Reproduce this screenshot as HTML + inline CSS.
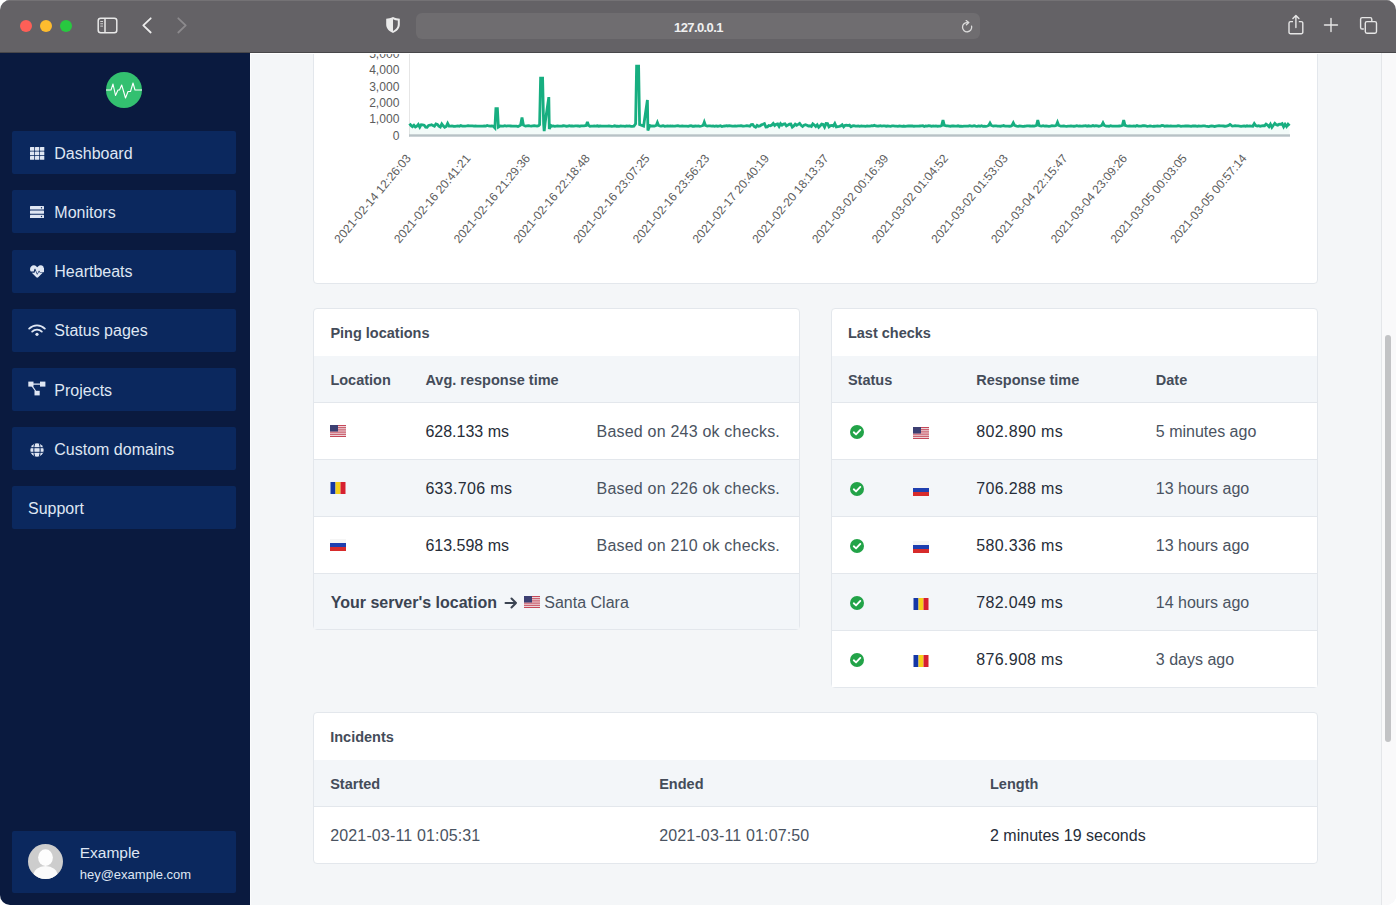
<!DOCTYPE html><html><head><meta charset="utf-8"><style>
*{margin:0;padding:0;box-sizing:border-box}
html,body{width:1396px;height:905px;overflow:hidden;background:#fff;font-family:"Liberation Sans",sans-serif}
#win{position:absolute;left:0;top:0;width:1396px;height:905px;overflow:hidden;border-radius:10px;background:#f4f6f8}
.box{position:absolute}
.tx{position:absolute;white-space:nowrap}
.b{font-weight:bold;font-size:14.5px;line-height:14.5px;color:#444c59}
.r{font-size:16px;line-height:16px}
.dk{color:#262d38}
.md{color:#4a5361}
.sb{font-size:16px;line-height:16px;color:#dfe6f3}
</style></head><body><div id="win"><div class="box" style="left:250px;top:52px;width:1146px;height:853px;background:#f4f6f8"></div>
<div class="box" style="left:1381px;top:52px;width:15px;height:853px;background:#f9f9fa;border-left:1px solid #e4e6e9"></div>
<div class="box" style="left:1385px;top:335px;width:6px;height:407px;background:#c2c3c5;border-radius:3px"></div>
<div class="box" style="left:313px;top:20px;width:1005px;height:264px;background:#fff;border:1px solid #e3e7ec;border-radius:4px"></div>
<svg class="box" style="left:0;top:0" width="1396" height="300" viewBox="0 0 1396 300"><line x1="409.5" y1="40" x2="409.5" y2="137" stroke="#e6e6e6" stroke-width="1"/><path d="M409.50,123.56 L410.97,125.44 L412.43,126.59 L413.90,125.25 L415.37,126.96 L416.83,126.10 L418.30,124.50 L419.77,127.17 L421.23,124.66 L422.70,124.82 L424.17,125.18 L425.63,127.10 L427.10,127.22 L428.57,125.44 L430.03,125.22 L431.50,124.72 L432.97,125.47 L434.43,126.21 L435.90,123.90 L437.37,124.44 L438.83,126.16 L440.30,127.06 L441.77,123.88 L443.23,125.76 L444.70,127.34 L446.17,126.49 L447.63,123.33 L449.10,126.15 L450.57,126.10 L452.03,125.99 L453.50,126.27 L454.97,126.28 L456.43,126.04 L457.90,125.95 L459.37,126.29 L460.83,125.59 L462.30,126.03 L463.77,126.13 L465.23,126.03 L466.70,125.94 L468.17,125.71 L469.63,125.90 L471.10,125.92 L472.57,125.81 L474.03,126.16 L475.50,125.99 L476.97,126.05 L478.43,126.14 L479.90,126.09 L481.37,126.11 L482.83,126.15 L484.30,125.97 L485.77,126.10 L487.23,125.51 L488.70,125.98 L490.17,126.19 L491.63,125.93 L493.10,126.12 L494.90,127.92 L495.90,108.73 L497.40,108.73 L498.40,127.10 L500.43,125.90 L501.90,126.04 L503.37,126.05 L504.83,125.70 L506.30,126.11 L507.77,125.89 L509.23,125.96 L510.70,126.00 L512.17,126.16 L513.63,126.11 L515.10,126.19 L516.57,126.15 L518.03,126.51 L519.50,125.89 L520.60,125.13 L522.00,117.59 L523.40,125.13 L525.37,126.13 L526.83,125.79 L528.30,125.68 L529.77,125.97 L531.23,126.17 L532.70,125.91 L534.17,125.73 L535.63,125.91 L537.10,126.08 L538.57,125.65 L539.60,124.64 L540.60,78.23 L542.60,78.23 L543.60,123.82 L544.20,131.20 L545.20,122.18 L548.80,97.09 L549.30,129.07 L550.80,125.46 L551.77,126.18 L553.23,125.92 L554.70,126.27 L556.17,126.07 L557.63,125.92 L559.10,126.05 L560.57,126.11 L562.03,126.00 L563.50,125.78 L564.97,125.87 L566.43,126.25 L567.90,126.12 L569.37,125.60 L570.83,126.02 L572.30,126.00 L573.77,126.06 L575.23,125.82 L576.70,125.92 L578.17,125.99 L579.63,126.21 L581.10,125.85 L582.57,125.91 L584.03,125.90 L586.20,125.46 L587.40,121.85 L588.60,125.46 L589.90,126.29 L591.37,126.13 L592.83,126.09 L594.30,126.00 L595.77,126.03 L597.23,125.78 L598.70,126.20 L600.17,125.99 L601.63,126.04 L603.10,126.18 L604.57,126.20 L606.03,126.06 L607.50,126.21 L608.97,125.96 L610.43,126.03 L611.90,126.34 L613.37,126.13 L614.83,125.77 L616.30,126.22 L617.77,126.13 L619.23,126.37 L620.70,125.88 L622.17,126.13 L623.63,126.20 L625.10,126.42 L626.57,125.89 L628.03,126.18 L629.50,125.94 L630.97,126.41 L632.43,126.28 L633.90,126.16 L635.60,123.82 L636.60,66.09 L638.60,66.09 L639.60,124.64 L643.60,126.12 L647.40,100.04 L647.90,130.38 L649.80,125.46 L651.50,126.14 L652.97,125.99 L654.43,126.10 L656.20,125.46 L657.40,122.51 L658.60,125.46 L660.30,126.17 L661.77,126.00 L663.23,125.73 L664.70,126.31 L666.17,126.03 L667.63,125.90 L669.10,126.11 L670.57,125.87 L672.03,126.02 L673.50,126.09 L674.97,126.15 L676.43,125.83 L677.90,125.66 L679.37,126.15 L680.83,126.21 L682.30,125.90 L683.77,126.14 L685.23,126.10 L686.70,126.15 L688.17,126.36 L689.63,125.88 L691.10,125.69 L692.57,126.24 L694.03,126.23 L695.50,125.86 L696.97,126.08 L698.43,125.94 L699.90,126.41 L701.37,126.03 L703.10,125.46 L704.30,122.18 L705.50,125.46 L707.23,126.08 L708.70,125.93 L710.17,125.85 L711.63,126.06 L713.10,125.90 L714.57,126.27 L716.03,125.89 L717.50,126.21 L718.97,126.03 L720.43,125.74 L721.90,126.51 L723.37,126.11 L724.83,126.01 L726.30,125.64 L727.77,125.96 L729.23,125.74 L730.70,125.95 L732.17,126.19 L733.63,126.11 L735.10,126.02 L736.57,126.07 L738.03,125.89 L739.50,125.87 L740.97,125.67 L742.43,125.98 L743.90,126.03 L745.37,125.93 L746.83,125.77 L748.30,125.95 L749.77,126.30 L751.23,124.66 L752.70,124.54 L754.17,126.53 L755.63,127.30 L757.10,125.41 L758.57,126.23 L760.03,125.93 L761.50,124.83 L762.97,124.25 L764.43,123.63 L765.90,126.99 L767.37,126.81 L768.83,125.49 L770.30,125.80 L771.77,125.01 L773.23,123.47 L774.70,125.44 L776.17,124.39 L777.63,123.99 L779.10,126.47 L780.57,123.66 L782.03,125.14 L783.50,124.10 L784.97,123.84 L786.43,125.92 L787.90,125.09 L789.37,124.20 L790.83,124.03 L792.30,127.08 L793.77,125.97 L795.23,124.12 L796.70,125.23 L798.17,124.38 L799.63,123.47 L801.10,125.33 L802.57,126.44 L804.03,125.19 L805.50,124.73 L806.97,125.20 L808.43,126.07 L809.90,125.78 L811.37,126.49 L812.83,123.86 L814.30,125.00 L815.77,126.52 L817.23,124.86 L818.70,127.23 L820.17,125.70 L821.63,124.06 L823.10,124.51 L824.57,127.08 L826.03,123.42 L827.50,123.56 L828.97,126.83 L830.43,125.57 L831.90,125.39 L833.37,126.05 L834.83,123.55 L836.30,126.82 L837.77,126.55 L839.23,126.41 L840.70,125.89 L842.17,124.80 L843.63,126.84 L845.10,125.25 L846.57,125.17 L848.03,125.56 L849.50,125.18 L850.97,126.69 L852.43,125.96 L853.90,125.77 L855.37,126.19 L856.83,126.22 L858.30,125.87 L859.77,126.25 L861.23,125.94 L862.70,126.15 L864.17,126.05 L865.63,126.39 L867.10,125.89 L868.57,126.13 L870.03,126.21 L871.50,125.63 L872.97,125.89 L874.43,125.34 L875.90,125.95 L877.37,126.10 L878.83,126.01 L880.30,125.72 L881.77,126.04 L883.23,125.95 L884.70,125.93 L886.17,126.21 L887.63,126.01 L889.10,126.13 L890.57,126.28 L892.03,125.86 L893.50,125.90 L894.97,126.02 L896.43,126.21 L897.90,126.43 L899.37,125.94 L900.83,126.05 L902.30,126.37 L903.77,126.05 L905.23,126.33 L906.70,126.04 L908.17,126.01 L909.63,125.96 L911.10,125.99 L912.57,126.00 L914.03,126.26 L915.50,126.11 L916.97,126.13 L918.43,126.08 L919.90,125.98 L921.37,125.91 L922.83,125.71 L924.30,126.54 L925.77,125.96 L927.23,126.07 L928.70,125.59 L930.17,125.85 L931.63,126.36 L933.10,125.95 L934.57,126.14 L936.03,125.84 L937.50,126.24 L938.97,126.05 L940.43,126.06 L941.70,125.46 L943.00,120.21 L944.30,125.46 L946.30,125.94 L947.77,125.84 L949.23,126.05 L950.70,126.23 L952.17,125.99 L953.63,125.92 L955.10,126.07 L956.57,126.04 L958.03,125.76 L959.50,126.25 L960.97,126.14 L962.43,126.41 L963.90,126.17 L965.37,126.18 L966.83,126.22 L968.30,126.17 L969.77,125.68 L971.23,126.07 L972.70,126.06 L974.17,125.60 L975.63,126.05 L977.10,126.38 L978.57,125.95 L980.03,126.22 L981.50,125.71 L982.97,126.28 L984.43,126.15 L985.90,126.35 L987.37,126.01 L988.70,125.46 L990.00,123.16 L991.30,125.46 L993.23,126.15 L994.70,125.85 L996.17,125.85 L997.63,126.02 L999.10,126.21 L1000.57,126.24 L1002.03,125.98 L1003.50,125.56 L1004.97,126.12 L1006.43,126.19 L1007.90,126.17 L1009.37,126.25 L1010.83,126.23 L1012.00,125.46 L1013.30,122.84 L1014.60,125.46 L1016.70,126.13 L1018.17,126.35 L1019.63,125.99 L1021.10,126.04 L1022.57,126.28 L1024.03,126.25 L1025.50,126.04 L1026.97,125.83 L1028.43,125.91 L1029.90,125.99 L1031.37,126.10 L1032.83,125.97 L1034.30,126.04 L1036.50,125.46 L1037.80,120.21 L1039.10,125.46 L1040.17,125.78 L1041.63,126.09 L1043.10,125.75 L1044.57,126.04 L1046.03,126.01 L1047.50,126.11 L1048.97,126.31 L1050.43,126.23 L1051.90,125.60 L1053.37,125.91 L1054.83,125.91 L1056.20,125.46 L1057.50,122.18 L1058.80,125.46 L1060.70,126.09 L1062.17,126.08 L1063.63,125.84 L1065.10,126.10 L1066.57,126.30 L1068.03,126.08 L1069.50,126.14 L1070.97,125.91 L1072.43,126.18 L1073.90,126.24 L1075.37,126.10 L1076.83,125.73 L1078.30,126.04 L1079.77,126.00 L1081.23,126.03 L1082.70,125.98 L1084.17,125.85 L1085.63,125.76 L1087.10,126.36 L1088.57,125.77 L1090.03,126.03 L1091.50,126.10 L1092.97,125.56 L1094.43,126.07 L1095.90,125.65 L1097.37,125.84 L1098.83,126.24 L1100.30,125.94 L1101.70,125.46 L1103.00,122.84 L1104.30,125.46 L1106.17,126.10 L1107.63,126.07 L1109.10,126.25 L1110.57,125.67 L1112.03,126.08 L1113.50,126.11 L1114.97,126.09 L1116.43,126.19 L1117.90,126.19 L1119.37,126.02 L1120.83,125.97 L1122.40,125.46 L1123.70,120.21 L1125.00,125.46 L1126.70,125.93 L1128.17,126.18 L1129.63,125.99 L1131.10,126.21 L1132.57,126.14 L1134.03,125.99 L1135.50,126.27 L1136.97,125.55 L1138.43,126.04 L1139.90,126.05 L1141.37,126.18 L1142.83,125.72 L1144.30,125.76 L1145.77,125.98 L1147.23,126.30 L1148.70,126.13 L1150.17,125.91 L1151.63,126.13 L1153.10,126.27 L1154.57,126.27 L1156.03,126.19 L1157.50,126.03 L1158.97,126.16 L1160.43,126.03 L1161.90,125.48 L1163.37,125.69 L1164.83,126.24 L1166.30,125.97 L1167.77,126.02 L1169.23,126.06 L1170.70,125.83 L1172.17,126.10 L1173.63,126.10 L1175.10,126.11 L1176.57,126.05 L1178.03,125.78 L1179.50,125.88 L1180.97,126.30 L1182.43,126.12 L1183.90,126.19 L1185.37,125.87 L1186.83,125.99 L1188.30,125.86 L1189.77,126.05 L1191.23,126.41 L1192.70,125.95 L1194.17,125.99 L1195.63,125.93 L1197.10,126.29 L1198.57,126.02 L1200.03,126.17 L1201.50,126.17 L1202.97,125.96 L1204.43,125.96 L1205.90,126.21 L1207.37,126.37 L1208.83,126.52 L1210.30,126.15 L1211.77,125.81 L1213.23,126.04 L1214.70,126.48 L1216.17,126.20 L1217.63,125.95 L1219.10,125.70 L1220.57,125.80 L1222.03,125.96 L1223.50,126.00 L1224.97,126.24 L1226.43,126.12 L1228.70,125.46 L1230.00,124.48 L1231.30,125.46 L1232.30,126.11 L1233.77,125.97 L1235.23,125.75 L1236.70,125.89 L1238.17,125.95 L1239.63,126.08 L1241.10,126.33 L1242.57,126.06 L1244.03,125.93 L1245.50,126.23 L1246.97,125.79 L1248.43,126.10 L1249.90,125.96 L1251.37,126.10 L1252.83,126.28 L1254.30,123.60 L1255.77,125.55 L1257.23,126.04 L1258.70,125.71 L1260.17,126.33 L1261.63,125.86 L1263.10,125.72 L1264.57,125.76 L1266.03,124.08 L1267.50,125.13 L1268.97,126.62 L1270.43,124.23 L1271.90,127.25 L1273.37,125.23 L1274.83,123.38 L1276.30,124.68 L1277.77,125.10 L1279.23,124.11 L1280.70,124.32 L1282.17,123.66 L1283.63,126.76 L1285.10,124.29 L1286.57,126.44 L1288.03,124.21 L1289.50,125.73 L1289.5,135.3 L409.5,135.3 Z" fill="rgba(26,179,130,0.05)"/><rect x="409" y="134.3" width="881" height="2.4" fill="#b8c2c6"/><path d="M409.50,123.56 L410.97,125.44 L412.43,126.59 L413.90,125.25 L415.37,126.96 L416.83,126.10 L418.30,124.50 L419.77,127.17 L421.23,124.66 L422.70,124.82 L424.17,125.18 L425.63,127.10 L427.10,127.22 L428.57,125.44 L430.03,125.22 L431.50,124.72 L432.97,125.47 L434.43,126.21 L435.90,123.90 L437.37,124.44 L438.83,126.16 L440.30,127.06 L441.77,123.88 L443.23,125.76 L444.70,127.34 L446.17,126.49 L447.63,123.33 L449.10,126.15 L450.57,126.10 L452.03,125.99 L453.50,126.27 L454.97,126.28 L456.43,126.04 L457.90,125.95 L459.37,126.29 L460.83,125.59 L462.30,126.03 L463.77,126.13 L465.23,126.03 L466.70,125.94 L468.17,125.71 L469.63,125.90 L471.10,125.92 L472.57,125.81 L474.03,126.16 L475.50,125.99 L476.97,126.05 L478.43,126.14 L479.90,126.09 L481.37,126.11 L482.83,126.15 L484.30,125.97 L485.77,126.10 L487.23,125.51 L488.70,125.98 L490.17,126.19 L491.63,125.93 L493.10,126.12 L494.90,127.92 L495.90,108.73 L497.40,108.73 L498.40,127.10 L500.43,125.90 L501.90,126.04 L503.37,126.05 L504.83,125.70 L506.30,126.11 L507.77,125.89 L509.23,125.96 L510.70,126.00 L512.17,126.16 L513.63,126.11 L515.10,126.19 L516.57,126.15 L518.03,126.51 L519.50,125.89 L520.60,125.13 L522.00,117.59 L523.40,125.13 L525.37,126.13 L526.83,125.79 L528.30,125.68 L529.77,125.97 L531.23,126.17 L532.70,125.91 L534.17,125.73 L535.63,125.91 L537.10,126.08 L538.57,125.65 L539.60,124.64 L540.60,78.23 L542.60,78.23 L543.60,123.82 L544.20,131.20 L545.20,122.18 L548.80,97.09 L549.30,129.07 L550.80,125.46 L551.77,126.18 L553.23,125.92 L554.70,126.27 L556.17,126.07 L557.63,125.92 L559.10,126.05 L560.57,126.11 L562.03,126.00 L563.50,125.78 L564.97,125.87 L566.43,126.25 L567.90,126.12 L569.37,125.60 L570.83,126.02 L572.30,126.00 L573.77,126.06 L575.23,125.82 L576.70,125.92 L578.17,125.99 L579.63,126.21 L581.10,125.85 L582.57,125.91 L584.03,125.90 L586.20,125.46 L587.40,121.85 L588.60,125.46 L589.90,126.29 L591.37,126.13 L592.83,126.09 L594.30,126.00 L595.77,126.03 L597.23,125.78 L598.70,126.20 L600.17,125.99 L601.63,126.04 L603.10,126.18 L604.57,126.20 L606.03,126.06 L607.50,126.21 L608.97,125.96 L610.43,126.03 L611.90,126.34 L613.37,126.13 L614.83,125.77 L616.30,126.22 L617.77,126.13 L619.23,126.37 L620.70,125.88 L622.17,126.13 L623.63,126.20 L625.10,126.42 L626.57,125.89 L628.03,126.18 L629.50,125.94 L630.97,126.41 L632.43,126.28 L633.90,126.16 L635.60,123.82 L636.60,66.09 L638.60,66.09 L639.60,124.64 L643.60,126.12 L647.40,100.04 L647.90,130.38 L649.80,125.46 L651.50,126.14 L652.97,125.99 L654.43,126.10 L656.20,125.46 L657.40,122.51 L658.60,125.46 L660.30,126.17 L661.77,126.00 L663.23,125.73 L664.70,126.31 L666.17,126.03 L667.63,125.90 L669.10,126.11 L670.57,125.87 L672.03,126.02 L673.50,126.09 L674.97,126.15 L676.43,125.83 L677.90,125.66 L679.37,126.15 L680.83,126.21 L682.30,125.90 L683.77,126.14 L685.23,126.10 L686.70,126.15 L688.17,126.36 L689.63,125.88 L691.10,125.69 L692.57,126.24 L694.03,126.23 L695.50,125.86 L696.97,126.08 L698.43,125.94 L699.90,126.41 L701.37,126.03 L703.10,125.46 L704.30,122.18 L705.50,125.46 L707.23,126.08 L708.70,125.93 L710.17,125.85 L711.63,126.06 L713.10,125.90 L714.57,126.27 L716.03,125.89 L717.50,126.21 L718.97,126.03 L720.43,125.74 L721.90,126.51 L723.37,126.11 L724.83,126.01 L726.30,125.64 L727.77,125.96 L729.23,125.74 L730.70,125.95 L732.17,126.19 L733.63,126.11 L735.10,126.02 L736.57,126.07 L738.03,125.89 L739.50,125.87 L740.97,125.67 L742.43,125.98 L743.90,126.03 L745.37,125.93 L746.83,125.77 L748.30,125.95 L749.77,126.30 L751.23,124.66 L752.70,124.54 L754.17,126.53 L755.63,127.30 L757.10,125.41 L758.57,126.23 L760.03,125.93 L761.50,124.83 L762.97,124.25 L764.43,123.63 L765.90,126.99 L767.37,126.81 L768.83,125.49 L770.30,125.80 L771.77,125.01 L773.23,123.47 L774.70,125.44 L776.17,124.39 L777.63,123.99 L779.10,126.47 L780.57,123.66 L782.03,125.14 L783.50,124.10 L784.97,123.84 L786.43,125.92 L787.90,125.09 L789.37,124.20 L790.83,124.03 L792.30,127.08 L793.77,125.97 L795.23,124.12 L796.70,125.23 L798.17,124.38 L799.63,123.47 L801.10,125.33 L802.57,126.44 L804.03,125.19 L805.50,124.73 L806.97,125.20 L808.43,126.07 L809.90,125.78 L811.37,126.49 L812.83,123.86 L814.30,125.00 L815.77,126.52 L817.23,124.86 L818.70,127.23 L820.17,125.70 L821.63,124.06 L823.10,124.51 L824.57,127.08 L826.03,123.42 L827.50,123.56 L828.97,126.83 L830.43,125.57 L831.90,125.39 L833.37,126.05 L834.83,123.55 L836.30,126.82 L837.77,126.55 L839.23,126.41 L840.70,125.89 L842.17,124.80 L843.63,126.84 L845.10,125.25 L846.57,125.17 L848.03,125.56 L849.50,125.18 L850.97,126.69 L852.43,125.96 L853.90,125.77 L855.37,126.19 L856.83,126.22 L858.30,125.87 L859.77,126.25 L861.23,125.94 L862.70,126.15 L864.17,126.05 L865.63,126.39 L867.10,125.89 L868.57,126.13 L870.03,126.21 L871.50,125.63 L872.97,125.89 L874.43,125.34 L875.90,125.95 L877.37,126.10 L878.83,126.01 L880.30,125.72 L881.77,126.04 L883.23,125.95 L884.70,125.93 L886.17,126.21 L887.63,126.01 L889.10,126.13 L890.57,126.28 L892.03,125.86 L893.50,125.90 L894.97,126.02 L896.43,126.21 L897.90,126.43 L899.37,125.94 L900.83,126.05 L902.30,126.37 L903.77,126.05 L905.23,126.33 L906.70,126.04 L908.17,126.01 L909.63,125.96 L911.10,125.99 L912.57,126.00 L914.03,126.26 L915.50,126.11 L916.97,126.13 L918.43,126.08 L919.90,125.98 L921.37,125.91 L922.83,125.71 L924.30,126.54 L925.77,125.96 L927.23,126.07 L928.70,125.59 L930.17,125.85 L931.63,126.36 L933.10,125.95 L934.57,126.14 L936.03,125.84 L937.50,126.24 L938.97,126.05 L940.43,126.06 L941.70,125.46 L943.00,120.21 L944.30,125.46 L946.30,125.94 L947.77,125.84 L949.23,126.05 L950.70,126.23 L952.17,125.99 L953.63,125.92 L955.10,126.07 L956.57,126.04 L958.03,125.76 L959.50,126.25 L960.97,126.14 L962.43,126.41 L963.90,126.17 L965.37,126.18 L966.83,126.22 L968.30,126.17 L969.77,125.68 L971.23,126.07 L972.70,126.06 L974.17,125.60 L975.63,126.05 L977.10,126.38 L978.57,125.95 L980.03,126.22 L981.50,125.71 L982.97,126.28 L984.43,126.15 L985.90,126.35 L987.37,126.01 L988.70,125.46 L990.00,123.16 L991.30,125.46 L993.23,126.15 L994.70,125.85 L996.17,125.85 L997.63,126.02 L999.10,126.21 L1000.57,126.24 L1002.03,125.98 L1003.50,125.56 L1004.97,126.12 L1006.43,126.19 L1007.90,126.17 L1009.37,126.25 L1010.83,126.23 L1012.00,125.46 L1013.30,122.84 L1014.60,125.46 L1016.70,126.13 L1018.17,126.35 L1019.63,125.99 L1021.10,126.04 L1022.57,126.28 L1024.03,126.25 L1025.50,126.04 L1026.97,125.83 L1028.43,125.91 L1029.90,125.99 L1031.37,126.10 L1032.83,125.97 L1034.30,126.04 L1036.50,125.46 L1037.80,120.21 L1039.10,125.46 L1040.17,125.78 L1041.63,126.09 L1043.10,125.75 L1044.57,126.04 L1046.03,126.01 L1047.50,126.11 L1048.97,126.31 L1050.43,126.23 L1051.90,125.60 L1053.37,125.91 L1054.83,125.91 L1056.20,125.46 L1057.50,122.18 L1058.80,125.46 L1060.70,126.09 L1062.17,126.08 L1063.63,125.84 L1065.10,126.10 L1066.57,126.30 L1068.03,126.08 L1069.50,126.14 L1070.97,125.91 L1072.43,126.18 L1073.90,126.24 L1075.37,126.10 L1076.83,125.73 L1078.30,126.04 L1079.77,126.00 L1081.23,126.03 L1082.70,125.98 L1084.17,125.85 L1085.63,125.76 L1087.10,126.36 L1088.57,125.77 L1090.03,126.03 L1091.50,126.10 L1092.97,125.56 L1094.43,126.07 L1095.90,125.65 L1097.37,125.84 L1098.83,126.24 L1100.30,125.94 L1101.70,125.46 L1103.00,122.84 L1104.30,125.46 L1106.17,126.10 L1107.63,126.07 L1109.10,126.25 L1110.57,125.67 L1112.03,126.08 L1113.50,126.11 L1114.97,126.09 L1116.43,126.19 L1117.90,126.19 L1119.37,126.02 L1120.83,125.97 L1122.40,125.46 L1123.70,120.21 L1125.00,125.46 L1126.70,125.93 L1128.17,126.18 L1129.63,125.99 L1131.10,126.21 L1132.57,126.14 L1134.03,125.99 L1135.50,126.27 L1136.97,125.55 L1138.43,126.04 L1139.90,126.05 L1141.37,126.18 L1142.83,125.72 L1144.30,125.76 L1145.77,125.98 L1147.23,126.30 L1148.70,126.13 L1150.17,125.91 L1151.63,126.13 L1153.10,126.27 L1154.57,126.27 L1156.03,126.19 L1157.50,126.03 L1158.97,126.16 L1160.43,126.03 L1161.90,125.48 L1163.37,125.69 L1164.83,126.24 L1166.30,125.97 L1167.77,126.02 L1169.23,126.06 L1170.70,125.83 L1172.17,126.10 L1173.63,126.10 L1175.10,126.11 L1176.57,126.05 L1178.03,125.78 L1179.50,125.88 L1180.97,126.30 L1182.43,126.12 L1183.90,126.19 L1185.37,125.87 L1186.83,125.99 L1188.30,125.86 L1189.77,126.05 L1191.23,126.41 L1192.70,125.95 L1194.17,125.99 L1195.63,125.93 L1197.10,126.29 L1198.57,126.02 L1200.03,126.17 L1201.50,126.17 L1202.97,125.96 L1204.43,125.96 L1205.90,126.21 L1207.37,126.37 L1208.83,126.52 L1210.30,126.15 L1211.77,125.81 L1213.23,126.04 L1214.70,126.48 L1216.17,126.20 L1217.63,125.95 L1219.10,125.70 L1220.57,125.80 L1222.03,125.96 L1223.50,126.00 L1224.97,126.24 L1226.43,126.12 L1228.70,125.46 L1230.00,124.48 L1231.30,125.46 L1232.30,126.11 L1233.77,125.97 L1235.23,125.75 L1236.70,125.89 L1238.17,125.95 L1239.63,126.08 L1241.10,126.33 L1242.57,126.06 L1244.03,125.93 L1245.50,126.23 L1246.97,125.79 L1248.43,126.10 L1249.90,125.96 L1251.37,126.10 L1252.83,126.28 L1254.30,123.60 L1255.77,125.55 L1257.23,126.04 L1258.70,125.71 L1260.17,126.33 L1261.63,125.86 L1263.10,125.72 L1264.57,125.76 L1266.03,124.08 L1267.50,125.13 L1268.97,126.62 L1270.43,124.23 L1271.90,127.25 L1273.37,125.23 L1274.83,123.38 L1276.30,124.68 L1277.77,125.10 L1279.23,124.11 L1280.70,124.32 L1282.17,123.66 L1283.63,126.76 L1285.10,124.29 L1286.57,126.44 L1288.03,124.21 L1289.50,125.73" fill="none" stroke="#17ae80" stroke-width="2.8" stroke-linejoin="miter" stroke-miterlimit="3"/><text x="399.4" y="139.7" text-anchor="end" font-family="Liberation Sans" font-size="12.1" fill="#5c5c5c">0</text><text x="399.4" y="123.3" text-anchor="end" font-family="Liberation Sans" font-size="12.1" fill="#5c5c5c">1,000</text><text x="399.4" y="106.7" text-anchor="end" font-family="Liberation Sans" font-size="12.1" fill="#5c5c5c">2,000</text><text x="399.4" y="90.7" text-anchor="end" font-family="Liberation Sans" font-size="12.1" fill="#5c5c5c">3,000</text><text x="399.4" y="74.0" text-anchor="end" font-family="Liberation Sans" font-size="12.1" fill="#5c5c5c">4,000</text><text x="399.4" y="57.6" text-anchor="end" font-family="Liberation Sans" font-size="12.1" fill="#5c5c5c">5,000</text><text x="411.5" y="158.6" text-anchor="end" transform="rotate(-50 411.5 158.6)" font-family="Liberation Sans" font-size="12" fill="#5c5c5c">2021-02-14 12:26:03</text><text x="471.2" y="158.6" text-anchor="end" transform="rotate(-50 471.2 158.6)" font-family="Liberation Sans" font-size="12" fill="#5c5c5c">2021-02-16 20:41:21</text><text x="530.9" y="158.6" text-anchor="end" transform="rotate(-50 530.9 158.6)" font-family="Liberation Sans" font-size="12" fill="#5c5c5c">2021-02-16 21:29:36</text><text x="590.6" y="158.6" text-anchor="end" transform="rotate(-50 590.6 158.6)" font-family="Liberation Sans" font-size="12" fill="#5c5c5c">2021-02-16 22:18:48</text><text x="650.3" y="158.6" text-anchor="end" transform="rotate(-50 650.3 158.6)" font-family="Liberation Sans" font-size="12" fill="#5c5c5c">2021-02-16 23:07:25</text><text x="710.0" y="158.6" text-anchor="end" transform="rotate(-50 710.0 158.6)" font-family="Liberation Sans" font-size="12" fill="#5c5c5c">2021-02-16 23:56:23</text><text x="769.7" y="158.6" text-anchor="end" transform="rotate(-50 769.7 158.6)" font-family="Liberation Sans" font-size="12" fill="#5c5c5c">2021-02-17 20:40:19</text><text x="829.4" y="158.6" text-anchor="end" transform="rotate(-50 829.4 158.6)" font-family="Liberation Sans" font-size="12" fill="#5c5c5c">2021-02-20 18:13:37</text><text x="889.1" y="158.6" text-anchor="end" transform="rotate(-50 889.1 158.6)" font-family="Liberation Sans" font-size="12" fill="#5c5c5c">2021-03-02 00:16:39</text><text x="948.8" y="158.6" text-anchor="end" transform="rotate(-50 948.8 158.6)" font-family="Liberation Sans" font-size="12" fill="#5c5c5c">2021-03-02 01:04:52</text><text x="1008.5" y="158.6" text-anchor="end" transform="rotate(-50 1008.5 158.6)" font-family="Liberation Sans" font-size="12" fill="#5c5c5c">2021-03-02 01:53:03</text><text x="1068.2" y="158.6" text-anchor="end" transform="rotate(-50 1068.2 158.6)" font-family="Liberation Sans" font-size="12" fill="#5c5c5c">2021-03-04 22:15:47</text><text x="1127.9" y="158.6" text-anchor="end" transform="rotate(-50 1127.9 158.6)" font-family="Liberation Sans" font-size="12" fill="#5c5c5c">2021-03-04 23:09:26</text><text x="1187.6" y="158.6" text-anchor="end" transform="rotate(-50 1187.6 158.6)" font-family="Liberation Sans" font-size="12" fill="#5c5c5c">2021-03-05 00:03:05</text><text x="1247.3" y="158.6" text-anchor="end" transform="rotate(-50 1247.3 158.6)" font-family="Liberation Sans" font-size="12" fill="#5c5c5c">2021-03-05 00:57:14</text></svg>
<div class="box" style="left:313px;top:308px;width:487px;height:322px;background:#fff;border:1px solid #e3e7ec;border-radius:4px"></div>
<div class="box" style="left:314px;top:356px;width:485px;height:47px;background:#f3f6f9;border-bottom:1px solid #e3e7ec;"></div>
<div class="box" style="left:314px;top:403px;width:485px;height:57px;background:#fff;border-bottom:1px solid #e3e7ec;"></div>
<div class="box" style="left:314px;top:460px;width:485px;height:57px;background:#f3f6f9;border-bottom:1px solid #e3e7ec;"></div>
<div class="box" style="left:314px;top:517px;width:485px;height:57px;background:#fff;border-bottom:1px solid #e3e7ec;"></div>
<div class="box" style="left:314px;top:574px;width:485px;height:55px;background:#f3f6f9;"></div>
<div class="tx b" style="left:330.4px;top:325.9px;">Ping locations</div>
<div class="tx b" style="left:330.4px;top:372.5px;">Location</div>
<div class="tx b" style="left:425.4px;top:372.5px;">Avg. response time</div>
<svg class="box" style="left:330px;top:425px" width="16" height="12" viewBox="0 0 16 12"><rect width="16" height="12" fill="#f4f0f2"/><rect x="0" y="0.00" width="16" height="0.92" fill="#c03a4c"/><rect x="0" y="1.85" width="16" height="0.92" fill="#c03a4c"/><rect x="0" y="3.69" width="16" height="0.92" fill="#c03a4c"/><rect x="0" y="5.54" width="16" height="0.92" fill="#c03a4c"/><rect x="0" y="7.38" width="16" height="0.92" fill="#c03a4c"/><rect x="0" y="9.23" width="16" height="0.92" fill="#c03a4c"/><rect x="0" y="11.08" width="16" height="0.92" fill="#c03a4c"/><rect width="8" height="6.5" fill="#3c3f72"/></svg>
<div class="tx r dk" style="left:425.4px;top:424.0px;">628.133 ms</div>
<div class="tx r md" style="left:596.6px;top:424.0px;letter-spacing:0.2px">Based on 243 ok checks.</div>
<svg class="box" style="left:330px;top:482px" width="16" height="12" viewBox="0 0 15 12"><rect width="5" height="12" fill="#1537a6"/><rect x="5" width="5" height="12" fill="#f5cf1a"/><rect x="10" width="5" height="12" fill="#d7202f"/></svg>
<div class="tx r dk" style="left:425.4px;top:481.0px;letter-spacing:0.33px">633.706 ms</div>
<div class="tx r md" style="left:596.6px;top:481.0px;letter-spacing:0.2px">Based on 226 ok checks.</div>
<svg class="box" style="left:330px;top:539px" width="16" height="12" viewBox="0 0 16 12"><rect width="16" height="4" fill="#f5f5f5"/><rect y="4" width="16" height="4" fill="#1e3fb0"/><rect y="8" width="16" height="4" fill="#d72b2b"/></svg>
<div class="tx r dk" style="left:425.4px;top:538.0px;">613.598 ms</div>
<div class="tx r md" style="left:596.6px;top:538.0px;letter-spacing:0.2px">Based on 210 ok checks.</div>
<div class="tx b dk" style="left:330.7px;top:594.5px;font-size:16px;line-height:16px;color:#3b4452">Your server's location</div>
<svg class="box" style="left:504px;top:596px" width="14" height="14" viewBox="0 0 14 14"><path d="M1.5 7 H12 M7.5 2.5 L12 7 L7.5 11.5" fill="none" stroke="#3b4452" stroke-width="2" stroke-linecap="round" stroke-linejoin="round"/></svg>
<svg class="box" style="left:524px;top:596px" width="16" height="12" viewBox="0 0 16 12"><rect width="16" height="12" fill="#f4f0f2"/><rect x="0" y="0.00" width="16" height="0.92" fill="#c03a4c"/><rect x="0" y="1.85" width="16" height="0.92" fill="#c03a4c"/><rect x="0" y="3.69" width="16" height="0.92" fill="#c03a4c"/><rect x="0" y="5.54" width="16" height="0.92" fill="#c03a4c"/><rect x="0" y="7.38" width="16" height="0.92" fill="#c03a4c"/><rect x="0" y="9.23" width="16" height="0.92" fill="#c03a4c"/><rect x="0" y="11.08" width="16" height="0.92" fill="#c03a4c"/><rect width="8" height="6.5" fill="#3c3f72"/></svg>
<div class="tx r md" style="left:544.3px;top:594.8px;">Santa Clara</div>
<div class="box" style="left:831px;top:308px;width:487px;height:380px;background:#fff;border:1px solid #e3e7ec;border-radius:4px"></div>
<div class="box" style="left:832px;top:356px;width:485px;height:47px;background:#f3f6f9;border-bottom:1px solid #e3e7ec;"></div>
<div class="box" style="left:832px;top:403px;width:485px;height:57px;background:#fff;border-bottom:1px solid #e3e7ec;"></div>
<div class="box" style="left:832px;top:460px;width:485px;height:57px;background:#f3f6f9;border-bottom:1px solid #e3e7ec;"></div>
<div class="box" style="left:832px;top:517px;width:485px;height:57px;background:#fff;border-bottom:1px solid #e3e7ec;"></div>
<div class="box" style="left:832px;top:574px;width:485px;height:57px;background:#f3f6f9;border-bottom:1px solid #e3e7ec;"></div>
<div class="box" style="left:832px;top:631px;width:485px;height:56px;background:#fff;"></div>
<div class="tx b" style="left:847.9px;top:325.9px;">Last checks</div>
<div class="tx b" style="left:847.9px;top:372.5px;">Status</div>
<div class="tx b" style="left:976.2px;top:372.5px;">Response time</div>
<div class="tx b" style="left:1155.8px;top:372.5px;">Date</div>
<svg class="box" style="left:849.7px;top:425px" width="14" height="14" viewBox="0 0 16 16"><circle cx="8" cy="8" r="8" fill="#22a348"/><path d="M4.3 8.3 L6.9 10.8 L11.8 5.6" fill="none" stroke="#fff" stroke-width="2.1" stroke-linecap="round" stroke-linejoin="round"/></svg>
<svg class="box" style="left:913px;top:427px" width="16" height="12" viewBox="0 0 16 12"><rect width="16" height="12" fill="#f4f0f2"/><rect x="0" y="0.00" width="16" height="0.92" fill="#c03a4c"/><rect x="0" y="1.85" width="16" height="0.92" fill="#c03a4c"/><rect x="0" y="3.69" width="16" height="0.92" fill="#c03a4c"/><rect x="0" y="5.54" width="16" height="0.92" fill="#c03a4c"/><rect x="0" y="7.38" width="16" height="0.92" fill="#c03a4c"/><rect x="0" y="9.23" width="16" height="0.92" fill="#c03a4c"/><rect x="0" y="11.08" width="16" height="0.92" fill="#c03a4c"/><rect width="8" height="6.5" fill="#3c3f72"/></svg>
<div class="tx r dk" style="left:976.2px;top:424.0px;letter-spacing:0.33px">802.890 ms</div>
<div class="tx r md" style="left:1155.8px;top:424.0px;">5 minutes ago</div>
<svg class="box" style="left:849.7px;top:482px" width="14" height="14" viewBox="0 0 16 16"><circle cx="8" cy="8" r="8" fill="#22a348"/><path d="M4.3 8.3 L6.9 10.8 L11.8 5.6" fill="none" stroke="#fff" stroke-width="2.1" stroke-linecap="round" stroke-linejoin="round"/></svg>
<svg class="box" style="left:913px;top:484px" width="16" height="12" viewBox="0 0 16 12"><rect width="16" height="4" fill="#f5f5f5"/><rect y="4" width="16" height="4" fill="#1e3fb0"/><rect y="8" width="16" height="4" fill="#d72b2b"/></svg>
<div class="tx r dk" style="left:976.2px;top:481.0px;letter-spacing:0.33px">706.288 ms</div>
<div class="tx r md" style="left:1155.8px;top:481.0px;">13 hours ago</div>
<svg class="box" style="left:849.7px;top:539px" width="14" height="14" viewBox="0 0 16 16"><circle cx="8" cy="8" r="8" fill="#22a348"/><path d="M4.3 8.3 L6.9 10.8 L11.8 5.6" fill="none" stroke="#fff" stroke-width="2.1" stroke-linecap="round" stroke-linejoin="round"/></svg>
<svg class="box" style="left:913px;top:541px" width="16" height="12" viewBox="0 0 16 12"><rect width="16" height="4" fill="#f5f5f5"/><rect y="4" width="16" height="4" fill="#1e3fb0"/><rect y="8" width="16" height="4" fill="#d72b2b"/></svg>
<div class="tx r dk" style="left:976.2px;top:538.0px;letter-spacing:0.33px">580.336 ms</div>
<div class="tx r md" style="left:1155.8px;top:538.0px;">13 hours ago</div>
<svg class="box" style="left:849.7px;top:596px" width="14" height="14" viewBox="0 0 16 16"><circle cx="8" cy="8" r="8" fill="#22a348"/><path d="M4.3 8.3 L6.9 10.8 L11.8 5.6" fill="none" stroke="#fff" stroke-width="2.1" stroke-linecap="round" stroke-linejoin="round"/></svg>
<svg class="box" style="left:913px;top:598px" width="16" height="12" viewBox="0 0 15 12"><rect width="5" height="12" fill="#1537a6"/><rect x="5" width="5" height="12" fill="#f5cf1a"/><rect x="10" width="5" height="12" fill="#d7202f"/></svg>
<div class="tx r dk" style="left:976.2px;top:595.0px;letter-spacing:0.33px">782.049 ms</div>
<div class="tx r md" style="left:1155.8px;top:595.0px;">14 hours ago</div>
<svg class="box" style="left:849.7px;top:653px" width="14" height="14" viewBox="0 0 16 16"><circle cx="8" cy="8" r="8" fill="#22a348"/><path d="M4.3 8.3 L6.9 10.8 L11.8 5.6" fill="none" stroke="#fff" stroke-width="2.1" stroke-linecap="round" stroke-linejoin="round"/></svg>
<svg class="box" style="left:913px;top:655px" width="16" height="12" viewBox="0 0 15 12"><rect width="5" height="12" fill="#1537a6"/><rect x="5" width="5" height="12" fill="#f5cf1a"/><rect x="10" width="5" height="12" fill="#d7202f"/></svg>
<div class="tx r dk" style="left:976.2px;top:652.0px;letter-spacing:0.33px">876.908 ms</div>
<div class="tx r md" style="left:1155.8px;top:652.0px;">3 days ago</div>
<div class="box" style="left:313px;top:712px;width:1005px;height:152px;background:#fff;border:1px solid #e3e7ec;border-radius:4px"></div>
<div class="box" style="left:314px;top:760px;width:1003px;height:47px;background:#f3f6f9;border-bottom:1px solid #e3e7ec;"></div>
<div class="tx b" style="left:330.2px;top:729.9px;">Incidents</div>
<div class="tx b" style="left:330.2px;top:776.6px;">Started</div>
<div class="tx b" style="left:659.2px;top:776.6px;">Ended</div>
<div class="tx b" style="left:990.0px;top:776.6px;">Length</div>
<div class="tx r md" style="left:330.2px;top:828.1px;letter-spacing:0.15px">2021-03-11 01:05:31</div>
<div class="tx r md" style="left:659.2px;top:828.1px;letter-spacing:0.15px">2021-03-11 01:07:50</div>
<div class="tx r dk" style="left:990.0px;top:828.1px;">2 minutes 19 seconds</div>
<div class="box" style="left:0;top:52px;width:250px;height:853px;background:#0a1a3f"></div>
<div class="box" style="left:250px;top:52px;width:1px;height:853px;background:#fbfcfd"></div>
<svg class="box" style="left:106px;top:71.7px" width="36" height="36" viewBox="0 0 36 36"><circle cx="18" cy="18" r="18" fill="#33c070"/><path d="M0 18 H5 L7 12 L9.5 23.5 L12 18 H13.5 L15.7 13 L19.5 26 L22 19.5 H24.5 L27 11 L29 18 H36" fill="none" stroke="#fff" stroke-width="1.1" stroke-linejoin="round"/></svg>
<div class="box" style="left:12px;top:131.3px;width:224px;height:43px;background:#0b285e;border-radius:2px"></div>
<div class="tx sb" style="left:54.3px;top:146.1px;">Dashboard</div>
<div class="box" style="left:12px;top:190.4px;width:224px;height:43px;background:#0b285e;border-radius:2px"></div>
<div class="tx sb" style="left:54.3px;top:205.2px;">Monitors</div>
<div class="box" style="left:12px;top:249.5px;width:224px;height:43px;background:#0b285e;border-radius:2px"></div>
<div class="tx sb" style="left:54.3px;top:264.3px;">Heartbeats</div>
<div class="box" style="left:12px;top:308.6px;width:224px;height:43px;background:#0b285e;border-radius:2px"></div>
<div class="tx sb" style="left:54.3px;top:323.4px;">Status pages</div>
<div class="box" style="left:12px;top:367.7px;width:224px;height:43px;background:#0b285e;border-radius:2px"></div>
<div class="tx sb" style="left:54.3px;top:382.5px;">Projects</div>
<div class="box" style="left:12px;top:426.8px;width:224px;height:43px;background:#0b285e;border-radius:2px"></div>
<div class="tx sb" style="left:54.3px;top:441.6px;">Custom domains</div>
<div class="box" style="left:12px;top:485.9px;width:224px;height:43px;background:#0b285e;border-radius:2px"></div>
<div class="tx sb" style="left:28.0px;top:500.7px;">Support</div>
<svg class="box" style="left:29.5px;top:146.5px" width="15" height="13" viewBox="0 0 15 13"><rect x="0.0" y="0.00" width="4.3" height="3.7" rx="0.5" fill="#dfe6f3"/><rect x="5.0" y="0.00" width="4.3" height="3.7" rx="0.5" fill="#dfe6f3"/><rect x="10.0" y="0.00" width="4.3" height="3.7" rx="0.5" fill="#dfe6f3"/><rect x="0.0" y="4.55" width="4.3" height="3.7" rx="0.5" fill="#dfe6f3"/><rect x="5.0" y="4.55" width="4.3" height="3.7" rx="0.5" fill="#dfe6f3"/><rect x="10.0" y="4.55" width="4.3" height="3.7" rx="0.5" fill="#dfe6f3"/><rect x="0.0" y="9.10" width="4.3" height="3.7" rx="0.5" fill="#dfe6f3"/><rect x="5.0" y="9.10" width="4.3" height="3.7" rx="0.5" fill="#dfe6f3"/><rect x="10.0" y="9.10" width="4.3" height="3.7" rx="0.5" fill="#dfe6f3"/></svg>
<svg class="box" style="left:30px;top:206px" width="14" height="12" viewBox="0 0 14 12"><rect x="0" y="0.0" width="14" height="3.4" rx="0.5" fill="#dfe6f3"/><rect x="0" y="4.4" width="14" height="3.4" rx="0.5" fill="#dfe6f3"/><rect x="0" y="8.8" width="14" height="3.4" rx="0.5" fill="#dfe6f3"/><circle cx="11.5" cy="1.7" r="0.7" fill="#0b285e"/><circle cx="11.5" cy="10.5" r="0.7" fill="#0b285e"/></svg>
<svg class="box" style="left:29.5px;top:264.5px" width="14.5" height="13" viewBox="0 28 512 440"><path fill="#dfe6f3" d="M320.2 243.8l-49.7 99.4c-6 12.1-23.4 11.7-28.8-.6L185 216.7 160.6 288H64l158.5 164.3c18.4 19 48.5 19 66.9 0L448 288H347.8l-27.6-44.2zM473.7 73.9l-2.4-2.5c-51.5-53.3-135.5-53.3-187.1 0L256 100.9l-28.3-29.5c-51.5-53.3-135.5-53.3-187.1 0L38.3 73.9c-46.5 48.2-49.3 123-10.3 174.4h102.2l28.9-86.2c5.1-15.2 26.5-15.4 32.1-.3l64.1 169.8 51.6-103.2c5.7-11.4 21.8-12.3 28.6-1.5l27.3 43.5H484c38.9-51.4 36.1-126.2-10.3-174.4z"/></svg>
<svg class="box" style="left:28px;top:324px" width="18" height="12" viewBox="0 0 18 12"><path d="M1.2 4.6 A11 11 0 0 1 16.8 4.6" fill="none" stroke="#dfe6f3" stroke-width="1.9" stroke-linecap="round"/><path d="M4.2 7.6 A6.8 6.8 0 0 1 13.8 7.6" fill="none" stroke="#dfe6f3" stroke-width="1.9" stroke-linecap="round"/><circle cx="9" cy="10.3" r="1.6" fill="#dfe6f3"/></svg>
<svg class="box" style="left:28px;top:381.4px" width="18" height="15" viewBox="0 0 18 15"><rect x="0.3" y="0.6" width="5.2" height="5" fill="#dfe6f3"/><rect x="12" y="0.6" width="5.4" height="5" fill="#dfe6f3"/><rect x="6.5" y="9.8" width="5.2" height="4.6" fill="#dfe6f3"/><path d="M5 3.1 H12 M4 4.8 L7.6 10" stroke="#dfe6f3" stroke-width="1.2"/></svg>
<svg class="box" style="left:30px;top:443px" width="14" height="14" viewBox="0 0 14 14"><circle cx="7" cy="7" r="6.7" fill="#dfe6f3"/><path d="M0.5 4.7 H13.5 M0.5 9.3 H13.5 M4.6 0.5 C3.6 4 3.6 10 4.6 13.5 M9.4 0.5 C10.4 4 10.4 10 9.4 13.5" fill="none" stroke="#0b285e" stroke-width="1"/></svg>
<div class="box" style="left:12px;top:831px;width:224px;height:62px;background:#0b285e;border-radius:2px"></div>
<svg class="box" style="left:28px;top:844px" width="35" height="35" viewBox="0 0 36 36"><defs><clipPath id="cc"><circle cx="18" cy="18" r="18"/></clipPath></defs><circle cx="18" cy="18" r="18" fill="#cdcdcd"/><g clip-path="url(#cc)"><ellipse cx="18" cy="14" rx="7.6" ry="8.6" fill="#fdfdfd"/><ellipse cx="18" cy="33" rx="12.5" ry="10.5" fill="#fafafa"/></g></svg>
<div class="tx sb" style="left:79.7px;top:845.0px;font-size:15.5px;line-height:15.5px">Example</div>
<div class="tx sb" style="left:79.7px;top:867.7px;font-size:13px;line-height:13px">hey@example.com</div>
<div class="box" style="left:0;top:0;width:1396px;height:53px;background:#646266;border-bottom:1px solid #48474a"></div>
<div class="box" style="left:0;top:0;width:1396px;height:1px;background:#747275"></div>
<div class="box" style="left:251px;top:53px;width:1130px;height:1px;background:#ffffff"></div>
<div class="box" style="left:20px;top:20px;width:12px;height:12px;border-radius:6px;background:#fe5f57"></div>
<div class="box" style="left:40px;top:20px;width:12px;height:12px;border-radius:6px;background:#febc2e"></div>
<div class="box" style="left:60px;top:20px;width:12px;height:12px;border-radius:6px;background:#28c840"></div>
<svg class="box" style="left:97px;top:17px" width="21" height="17" viewBox="0 0 21 17"><rect x="1.2" y="1.2" width="18.6" height="14.6" rx="2.5" fill="none" stroke="#e8e8e8" stroke-width="1.5"/><path d="M8 1.2 V15.8" stroke="#e8e8e8" stroke-width="1.5"/><path d="M3.3 4.5 H6 M3.3 6.8 H6 M3.3 9.1 H6" stroke="#d0d0d0" stroke-width="1"/></svg>
<svg class="box" style="left:140px;top:16px" width="14" height="18" viewBox="0 0 14 18"><path d="M10.7 2.3 L3.3 9.4 L10.7 16.5" fill="none" stroke="#ececec" stroke-width="1.8" stroke-linecap="round" stroke-linejoin="round"/></svg>
<svg class="box" style="left:175px;top:16px" width="14" height="18" viewBox="0 0 14 18"><path d="M3.3 2.3 L10.7 9.4 L3.3 16.5" fill="none" stroke="#8c8a8d" stroke-width="1.8" stroke-linecap="round" stroke-linejoin="round"/></svg>
<svg class="box" style="left:385px;top:16px" width="16" height="18" viewBox="0 0 16 18"><path d="M8 1 C5.5 2.2 3.4 2.6 1.2 2.7 V8.5 C1.2 12.6 4.3 15.4 8 17 C11.7 15.4 14.8 12.6 14.8 8.5 V2.7 C12.6 2.6 10.5 2.2 8 1 Z" fill="#eaeaea"/><path d="M8 3.2 C9.8 4 11.3 4.4 12.8 4.5 V8.6 C12.8 11.5 10.8 13.6 8 14.9 Z" fill="#646266"/></svg>
<div class="box" style="left:416px;top:13px;width:564px;height:26px;border-radius:6px;background:#6f6d70"></div>
<div class="tx" style="left:674px;top:21.3px;font-size:13px;line-height:13px;color:#f0f0f0;font-weight:bold;letter-spacing:-0.6px">127.0.0.1</div>
<svg class="box" style="left:961px;top:20px" width="13" height="14" viewBox="0 0 13 14"><path d="M10.6 6.2 A4.6 4.6 0 1 1 6.5 2.6" fill="none" stroke="#dcdcdc" stroke-width="1.3" stroke-linecap="round"/><path d="M5.2 0.6 L7.8 2.6 L5.4 4.7" fill="none" stroke="#dcdcdc" stroke-width="1.3" stroke-linecap="round" stroke-linejoin="round"/></svg>
<svg class="box" style="left:1286px;top:13px" width="20" height="23" viewBox="0 0 20 23"><path d="M7 8.6 H4.6 A1.6 1.6 0 0 0 3 10.2 V19.2 A1.6 1.6 0 0 0 4.6 20.8 H15.2 A1.6 1.6 0 0 0 16.8 19.2 V10.2 A1.6 1.6 0 0 0 15.2 8.6 H12.8" fill="none" stroke="#e6e6e6" stroke-width="1.4"/><path d="M9.9 14.5 V2.8 M6.9 5.6 L9.9 2.6 L12.9 5.6" fill="none" stroke="#e6e6e6" stroke-width="1.4" stroke-linecap="round" stroke-linejoin="round"/></svg>
<svg class="box" style="left:1323px;top:17px" width="16" height="16" viewBox="0 0 16 16"><path d="M8 1.5 V14.5 M1.5 8 H14.5" stroke="#e6e6e6" stroke-width="1.4" stroke-linecap="round"/></svg>
<svg class="box" style="left:1358px;top:15px" width="22" height="21" viewBox="0 0 22 21"><path d="M5.8 14 H4.2 A1.6 1.6 0 0 1 2.6 12.4 V4.2 A1.6 1.6 0 0 1 4.2 2.6 H12.2 A1.6 1.6 0 0 1 13.8 4.2 V5.9" fill="none" stroke="#e6e6e6" stroke-width="1.4"/><rect x="7.3" y="6.6" width="11.2" height="11.6" rx="1.6" fill="none" stroke="#e6e6e6" stroke-width="1.4"/></svg></div></body></html>
